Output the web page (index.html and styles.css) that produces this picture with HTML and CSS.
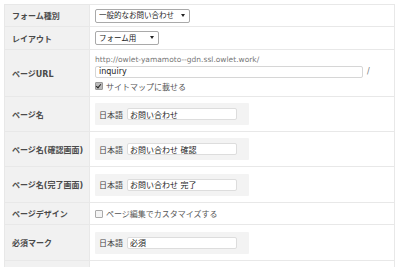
FILE: index.html
```html
<!DOCTYPE html>
<html lang="ja">
<head>
    <meta charset="UTF-8">
    <title>フォーム設定</title>
    <link rel="stylesheet" href="styles.css">
</head>
<body>
    <table class="settings">
        <tr class="row-1">
            <th>フォーム種別</th>
            <td>
                <span class="select-wrap w-type"><select><option>一般的なお問い合わせ</option></select></span>
            </td>
        </tr>
        <tr class="row-2">
            <th>レイアウト</th>
            <td>
                <span class="select-wrap w-layout"><select><option>フォーム用</option></select></span>
            </td>
        </tr>
        <tr class="row-3">
            <th>ページURL</th>
            <td>
                <div class="url-base">http://owlet-yamamoto--gdn.ssl.owlet.work/</div>
                <div class="url-line">
                    <input type="text" class="url-input" value="inquiry">
                    <span class="slash">/</span>
                </div>
                <label class="check"><span class="box checked"></span>サイトマップに載せる</label>
            </td>
        </tr>
        <tr class="row-4">
            <th>ページ名</th>
            <td>
                <div class="lang-box"><span class="lang">日本語</span><input type="text" value="お問い合わせ"></div>
            </td>
        </tr>
        <tr class="row-5">
            <th>ページ名(確認画面)</th>
            <td>
                <div class="lang-box"><span class="lang">日本語</span><input type="text" value="お問い合わせ 確認"></div>
            </td>
        </tr>
        <tr class="row-6">
            <th>ページ名(完了画面)</th>
            <td>
                <div class="lang-box"><span class="lang">日本語</span><input type="text" value="お問い合わせ 完了"></div>
            </td>
        </tr>
        <tr class="row-7">
            <th>ページデザイン</th>
            <td>
                <label class="check muted"><span class="box"></span>ページ編集でカスタマイズする</label>
            </td>
        </tr>
        <tr class="row-8">
            <th>必須マーク</th>
            <td>
                <div class="lang-box"><span class="lang">日本語</span><input type="text" value="必須"></div>
            </td>
        </tr>
        <tr class="row-9">
            <th></th>
            <td></td>
        </tr>
    </table>
</body>
</html>
```

FILE: styles.css
```css
body {
    margin: 4px;
    background: #fff;
    font-family: "DejaVu Sans", "Noto Sans CJK JP", sans-serif;
    font-size: 8px;
    color: #333;
}

.settings {
    width: 391px;
    border-collapse: collapse;
    table-layout: fixed;
}

.settings th,
.settings td {
    border: 1px solid #e8e8e8;
    padding: 0;
    vertical-align: middle;
}

.settings th {
    width: 77px;
    padding-left: 7px;
    background: #f1f1f1;
    text-align: left;
    font-weight: bold;
    color: #4a4a4a;
}

.settings td {
    padding-left: 5px;
    background: #fff;
}

.row-1 { height: 22px; }
.row-2 { height: 23px; }
.row-3 { height: 47px; }
.row-4 { height: 35px; }
.row-5 { height: 35px; }
.row-6 { height: 36px; }
.row-7 { height: 22px; }
.row-8 { height: 36px; }
.row-9 { height: 10px; }

/* select boxes */
.select-wrap {
    position: relative;
    display: inline-block;
    vertical-align: middle;
}

.select-wrap select {
    appearance: none;
    -webkit-appearance: none;
    display: block;
    width: 100%;
    height: 14px;
    margin: 0;
    padding: 0 0 0 3px;
    border: 1px solid #a9a9a9;
    border-radius: 2px;
    background: #fff;
    font-family: inherit;
    font-size: 7.5px;
    color: #222;
}

.select-wrap::after {
    content: "";
    position: absolute;
    top: 5px;
    right: 5px;
    border-left: 2px solid transparent;
    border-right: 2px solid transparent;
    border-top: 3px solid #222;
}

.w-type { width: 95px; }
.w-layout { width: 64px; }

/* url */
.url-base {
    color: #777;
    font-size: 7.5px;
    line-height: 10px;
    margin-bottom: 1px;
}

.url-line {
    display: flex;
    align-items: center;
    gap: 4px;
}

.url-input {
    width: 268px;
    height: 12px;
    box-sizing: border-box;
    margin: 0;
    padding: 0 3px;
    border: 1px solid #d6d6d6;
    border-radius: 2px;
    font-family: inherit;
    font-size: 8px;
    color: #222;
}

.slash {
    color: #777;
}

.check {
    display: flex;
    align-items: center;
    gap: 3px;
    margin-top: 3px;
    color: #555;
}

.check.muted {
    margin-top: 0;
}

.box {
    width: 6px;
    height: 6px;
    border: 1px solid #aaa;
    border-radius: 1px;
    background: #f4f4f4;
    position: relative;
}

.box.checked {
    background: #bbb;
    border-color: #999;
}

.box.checked::after {
    content: "";
    position: absolute;
    left: 1px;
    top: 0;
    width: 2px;
    height: 4px;
    border-right: 1px solid #222;
    border-bottom: 1px solid #222;
    transform: rotate(40deg);
}

/* language fields */
.lang-box {
    display: inline-flex;
    align-items: center;
    height: 22px;
    padding: 0 12px 0 4px;
    background: #f3f3f3;
    border-radius: 1px;
}

.lang {
    width: 28px;
    color: #444;
}

.lang-box input {
    width: 110px;
    height: 12px;
    box-sizing: border-box;
    margin: 0;
    padding: 0 2px;
    border: 1px solid #ddd;
    border-radius: 2px;
    background: #fff;
    font-family: inherit;
    font-size: 8px;
    color: #222;
}
```
